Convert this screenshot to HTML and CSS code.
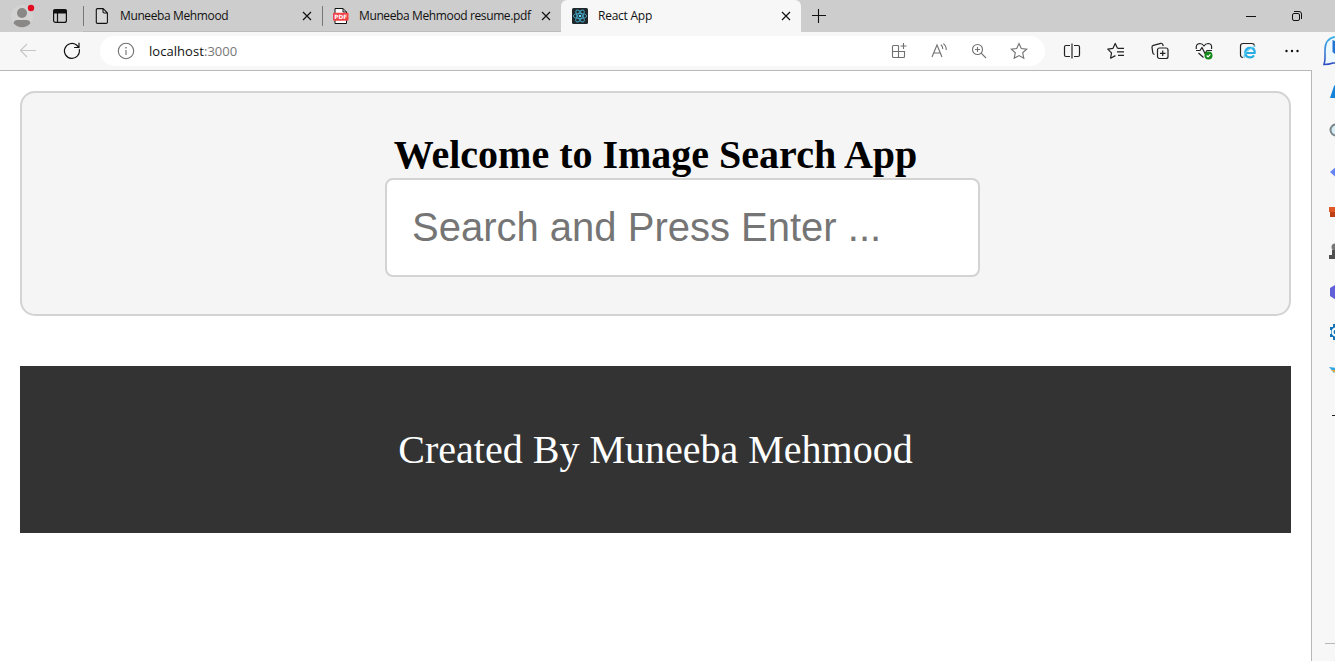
FILE: index.html
```html
<!DOCTYPE html>
<html lang="en">
<head>
<meta charset="utf-8">
<title>React App</title>
<link rel="stylesheet" href="styles.css">
</head>
<body>
<div class="browser">
  <header class="tabstrip">
    <div class="profile">
      <svg width="24" height="28" viewBox="0 0 24 28"><circle cx="11" cy="15" r="11" fill="#d3d3d3"/><circle cx="11" cy="12" r="5" fill="#8a8886"/><path d="M2.7 22.500Q2.700 19 6.500 19h9q3.800 0 3.800 3.500Q16 26.200 11 26.200T2.700 22.500z" fill="#8a8886"/><circle cx="20" cy="7" r="3.200" fill="#e30b22"/></svg>
    </div>
    <div class="workspaces">
      <svg width="16" height="16" viewBox="0 0 16 16" fill="none" stroke="#111" stroke-width="1.200"><rect x="1.600" y="1.600" width="12.800" height="12.800" rx="2"/><path d="M2 2h12v3H2z" fill="#111"/><path d="M5.500 5v9.500"/></svg>
    </div>
    <div class="tab">
      <svg class="favicon" width="16" height="16" viewBox="0 0 16 16" fill="#d8d8d8" stroke="#111" stroke-width="1.100" stroke-linejoin="round"><path d="M3.500.6h5.700l4.200 4.200v9.400q0 1.200-1.200 1.200H3.500q-1.200 0-1.200-1.200V1.800q0-1.200 1.200-1.200zM9 .8v3q0 1.200 1.200 1.200h3"/></svg>
      <span class="tab-title long">Muneeba Mehmood</span>
      <svg class="close" width="10" height="10" viewBox="0 0 10 10"><path d="M1 1l8 8M9 1l-8 8"/></svg>
    </div>
    <div class="tab">
      <svg class="favicon" width="16" height="16" viewBox="0 0 16 16"><path d="M2 .5h8l3.500 3.500v11.500H2z" fill="#fff" stroke="#111"/><path d="M10 .5V4h3.500" fill="none" stroke="#111"/><rect x="0" y="4.700" width="15.500" height="8" rx="1" fill="#ef4146"/><text x="7.700" y="10.900" class="pdf">PDF</text></svg>
      <span class="tab-title long">Muneeba Mehmood resume.pdf</span>
      <svg class="close" width="10" height="10" viewBox="0 0 10 10"><path d="M1 1l8 8M9 1l-8 8"/></svg>
    </div>
    <div class="tab active">
      <svg class="favicon" width="16" height="16" viewBox="0 0 16 16"><rect width="16" height="16" rx="1.500" fill="#20272b"/><g fill="none" stroke="#43a5c4" stroke-width=".9"><ellipse cx="8" cy="8" rx="6.700" ry="2.600"/><ellipse cx="8" cy="8" rx="6.700" ry="2.600" transform="rotate(60 8 8)"/><ellipse cx="8" cy="8" rx="6.700" ry="2.600" transform="rotate(120 8 8)"/></g><circle cx="8" cy="8" r="1.300" fill="#61dafb"/></svg>
      <span class="tab-title short">React App</span>
      <svg class="close" width="10" height="10" viewBox="0 0 10 10"><path d="M1 1l8 8M9 1l-8 8"/></svg>
    </div>
    <svg class="newtab" width="14" height="14" viewBox="0 0 14 14"><path d="M6.500 0v14M0 6.500h14" stroke="#111" stroke-width="1.100"/></svg>
    <div class="window-buttons">
      <svg width="46" height="32" viewBox="0 0 46 32"><path d="M18 16.500h10" stroke="#111"/></svg>
      <svg width="46" height="32" viewBox="0 0 46 32" fill="none" stroke="#111"><rect x="18.500" y="13.500" width="7" height="7" rx="1.500"/><path d="M20 11.500h5q2.500 0 2.500 2.500v5"/></svg>
    </div>
  </header>

  <nav class="toolbar">
    <div class="cell back"><svg width="18" height="16" viewBox="0 0 18 16" fill="none" stroke="#c5c5c5" stroke-width="1.100"><path d="M17 7.500H1.500M8 1L1.500 7.500 8 14"/></svg></div>
    <div class="cell"><svg width="18" height="18" viewBox="0 0 18 18" fill="none" stroke="#111" stroke-width="1.200" stroke-linecap="round" stroke-linejoin="round"><path d="M16.300 7.500A7.500 7.500 0 1 1 13.500 3L16 5.500M16 1.200v4.300h-4.400"/></svg></div>
    <div class="address">
      <svg class="info" width="18" height="18" viewBox="0 0 18 18" fill="none" stroke="#707070" stroke-width="1.100"><circle cx="9" cy="9" r="7.700"/><path d="M9 8v5"/><path d="M9 5v1.500" stroke-width="1.400"/></svg>
      <span class="url">localhost<span class="port">:3000</span></span>
      <div class="address-actions">
        <svg width="16" height="16" viewBox="0 0 16 16"><path d="M7.500 2.500h-5q-1 0-1 1v10q0 1 1 1h10q1 0 1-1v-5h-12M7.500 2.500v12M12.500 0v6M9.500 3h6"/></svg>
        <svg width="18" height="16" viewBox="0 0 18 16"><path d="M2 14L7 2l5 12M3.800 10h6.400M10.800 1.800q2 1.200 2 4.200M13.300.6q3.200 2.200 2.900 6.400"/></svg>
        <svg width="16" height="16" viewBox="0 0 16 16"><circle cx="6.500" cy="6.500" r="5"/><path d="M10.200 10.200L15 15M6.500 4v5M4 6.500h5"/></svg>
        <svg width="18" height="18" viewBox="0 0 18 18"><path d="M9 1.500l2.300 5 5.400.6-4 3.700 1.100 5.500L9 13.600l-4.800 2.700 1.100-5.500-4-3.700 5.400-.6z"/></svg>
      </div>
    </div>
    <div class="cell"><svg width="18" height="16" viewBox="0 0 18 16"><path d="M7 2.500H3q-1.500 0-1.500 1.500v8q0 1.500 1.500 1.500h4M11 2.500h4q1.500 0 1.500 1.500v8q0 1.500-1.500 1.500h-4M9 .5v15"/></svg></div>
    <div class="cell"><svg width="18" height="18" viewBox="0 0 18 18"><path d="M10.500 6.300L8.200 1.500 6 6.300l-5.200.8 3.700 3.700-.9 5.400 4.800-2.600M10.500 6.300h6.500M10 9.800h7M11 13.300h6"/></svg></div>
    <div class="cell"><svg width="18" height="18" viewBox="0 0 18 18"><rect x="6.500" y="6" width="10.500" height="10.500" rx="2"/><path d="M11.700 8.500v5.500M9 11.300h5.500M3.500 12.500q-1.400-.4-1.700-1.700L1 5.300q-.2-1.600 1.300-2l7.500-2q1.500-.3 2 1.200l.4 1.500"/></svg></div>
    <div class="cell"><svg width="18" height="18" viewBox="0 0 18 18"><path d="M1.300 7Q.5 1.800 4.800 1.500 7.500 1.500 9 4q1.500-2.500 4.200-2.500Q17.500 1.800 16.500 7M1 8.500h4l2-3 3 6 2-3h5M3.500 11l5 4.500"/><circle cx="13.500" cy="13.500" r="4" fill="#16891b" stroke="none"/><path d="M11.700 13.500l1.300 1.300 2.400-2.500" stroke="#fff"/></svg></div>
    <div class="cell"><svg width="18" height="18" viewBox="0 0 18 18"><path d="M4 15.500q-2.500 0-2.500-2.500V4q0-2.500 2.500-2.500h9q2 0 2.500 2"/><path d="M6.600 11h9.200q0-5.200-4.600-5.200t-5 4.800q0 4.800 4.800 4.800 2.700 0 4-2" stroke="#28aee4" stroke-width="2.200"/><path d="M5 16Q4.500 9 16.500 4" stroke="#65cef5"/></svg></div>
    <div class="cell"><svg width="16" height="4" viewBox="0 0 16 4"><g fill="#111" stroke="none"><circle cx="2.500" cy="2" r="1.200"/><circle cx="8" cy="2" r="1.200"/><circle cx="13.500" cy="2" r="1.200"/></g></svg></div>
    <svg class="assistant" width="32" height="32" viewBox="0 0 32 32"><defs><linearGradient id="bubble" x2="0" y2="1"><stop stop-color="#42b6e9"/><stop offset="1" stop-color="#304fc1"/></linearGradient></defs><path d="M16 1.500Q2 1.500 2 15v8q0 3-1 6.500 5 0 9-1.500h8q12 0 12-13T16 1.500z" fill="#eef8ff" stroke="url(#bubble)" stroke-width="1.600"/><path d="M9.500 5l5 2v14l-5-4z" fill="#2474d8"/></svg>
  </nav>

  <div class="workspace">
    <main class="page">
      <section class="search-panel">
        <h1>Welcome to Image Search App</h1>
        <input class="search" type="text" placeholder="Search and Press Enter ...">
      </section>
      <footer class="credit">Created By Muneeba Mehmood</footer>
    </main>
    <aside class="sidebar">
      <div class="apps">
        <svg viewBox="0 0 20 20"><path d="M1 16L5 4q5-6 10 0l4 12z" fill="#1683d8"/></svg>
        <svg viewBox="0 0 20 20"><circle cx="7" cy="8" r="5.500" fill="#d5edf5" stroke="#7b8587" stroke-width="2"/><path d="M11 12l6 6" stroke="#777" stroke-width="2"/></svg>
        <svg viewBox="0 0 20 20"><path d="M1 10l8-7 9 7-9 7z" fill="#6684f4"/></svg>
        <svg viewBox="0 0 20 20"><path d="M0 5h19v5H0z" fill="#df5827"/><path d="M1 10h17v5H1z" fill="#bd3f13"/></svg>
        <svg viewBox="0 0 20 20"><circle cx="6" cy="5" r="3.500" fill="#777"/><path d="M3 8h6l1 5h3v4H0v-4h3z" fill="#505050"/></svg>
        <svg viewBox="0 0 20 20"><path d="M1 6l8-5 8 5v8l-8 5-8-5z" fill="#6260d8"/></svg>
        <svg viewBox="0 0 20 20"><path d="M1 5h3V2h12v16H4v-3H1v-3h1V8H1z" fill="#1374b8"/><circle cx="7" cy="10" r="3.500" fill="none" stroke="#fff" stroke-width="2"/></svg>
        <svg viewBox="0 0 20 20"><path d="M0 5l9 1-4 5z" fill="#35a6df"/><path d="M2 8h11v7z" fill="#eda92c"/></svg>
        <svg viewBox="0 0 20 20"><path d="M3 13.500h16" stroke="#222"/></svg>
      </div>
      <div class="sidebar-end"><svg width="12" height="18" viewBox="0 0 12 18"><path d="M2 18l3-2h7v2z" fill="#111"/></svg></div>
    </aside>
  </div>
</div>
</body>
</html>
```
FILE: styles.css
```css
* { box-sizing: border-box; }
body { margin: 0; overflow: hidden; background: #fff; }
svg { display: block; flex: none; }
.browser { display: flex; flex-direction: column; width: 1335px; height: 661px; overflow: hidden; font-family: "Open Sans", sans-serif; }
.tabstrip { display: flex; flex: none; height: 32px; background: #cdcdcd; color: #111; font-size: 12px; }
.profile { width: 52px; padding: 1px 0 0 11px; }
.workspaces { width: 31px; padding-top: 8px; }
.tab { display: flex; align-items: center; width: 239px; height: 32px; padding: 0 10px 0 11px; position: relative; border-bottom: 1px solid #bdbdbd; }
.tab::before { content: ""; position: absolute; left: 0; top: 6px; width: 1px; height: 20px; background: #777; }
.tab.active { width: 240px; background: #f7f7f7; border: 0; border-radius: 6px 6px 0 0; }
.tab.active::before { display: none; }
.tab-title { margin-left: 10px; white-space: nowrap; line-height: 30px; }
.long { letter-spacing: -0.38px; }
.short { letter-spacing: -0.25px; }
.close { margin-left: auto; fill: none; stroke: #111; stroke-width: 1.2; }
.pdf { font: bold 5.8px "DejaVu Sans", sans-serif; fill: #fff; text-anchor: middle; }
.newtab { margin: 9px 0 0 11px; }
.window-buttons { display: flex; margin-left: auto; margin-right: 15px; }
.toolbar { display: flex; align-items: center; flex: none; height: 38px; background: #f7f7f7; }
.cell { display: flex; align-items: center; justify-content: center; flex: none; width: 44px; height: 38px; fill: none; stroke: #222; stroke-width: 1.2; stroke-linejoin: round; }
.back { margin-left: 6px; }
.address { display: flex; align-items: center; flex: none; width: 945px; height: 30px; margin: 0 5px 0 6px; padding: 0 6px 0 17px; border-radius: 15px; background: #fff; }
.url { margin-left: 14px; color: #111; font-size: 13px; line-height: 28px; white-space: nowrap; letter-spacing: 0.05px; }
.port { color: #777; }
.address-actions { display: grid; grid-template-columns: repeat(4, 40px); place-items: center; margin-left: auto; fill: none; stroke: #707070; stroke-width: 1.1; }
.assistant { margin-left: 9px; }
.workspace { display: flex; flex: 1; min-height: 0; }
.page { flex: none; width: 1311px; padding: 20px 20px 0; border-top: 1px solid #b8b8b8; font-family: "Liberation Serif", "Times New Roman", serif; }
.search-panel { display: flex; flex-direction: column; align-items: flex-start; height: 225px; border: 2px solid #d3d3d3; border-radius: 15px; background: #f5f5f5; padding-top: 40px; }
h1 { align-self: center; margin: 0 0 2px; font-size: 40px; line-height: 43px; font-weight: bold; color: #000; white-space: nowrap; }
.search { width: 595px; height: 99px; margin: 0 0 0 363px; padding: 0 25px; border: 2px solid #d3d3d3; border-radius: 8px; background: #fff; font: 40px "Liberation Sans", Arial, sans-serif; }
.search::placeholder { color: #757575; opacity: 1; }
.credit { height: 167px; margin-top: 50px; background: #333; color: #fff; font-size: 40px; line-height: 167px; text-align: center; }
.sidebar { flex: none; width: 24px; overflow: hidden; display: flex; flex-direction: column; justify-content: space-between; background: #f7f7f7; border-left: 1px solid #b8b8b8; }
.apps { display: grid; grid-auto-rows: 40px; align-items: center; padding: 2px 0 0 17px; }
.apps svg { width: 20px; height: 20px; }
.sidebar-end { height: 18px; margin-left: 13px; border-top: 1px solid #b8b8b8; padding-left: 6px; }
```
